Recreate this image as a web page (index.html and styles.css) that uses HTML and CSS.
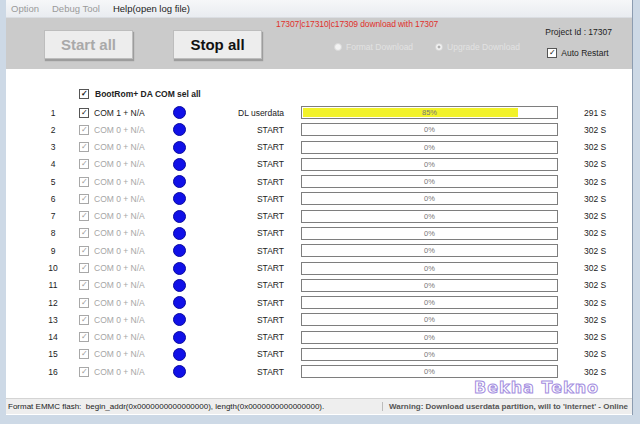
FILE: index.html
```html
<!DOCTYPE html>
<html lang="en">
<head>
    <meta charset="utf-8">
    <title>Download Tool</title>
    <link rel="stylesheet" href="styles.css">
</head>
<body>
    <div class="window">
        <div class="menubar">
            <span class="menu-item dim">Option</span>
            <span class="menu-item dim">Debug Tool</span>
            <span class="menu-item">Help(open log file)</span>
        </div>

        <div class="toolbar">
            <button class="big-btn disabled">Start all</button>
            <button class="big-btn">Stop all</button>
            <div class="mid">
                <div class="red-note">17307|c17310|c17309 download with 17307</div>
                <div class="radios">
                    <span class="radio"><span class="dot"></span>Format Download</span>
                    <span class="radio"><span class="dot on"></span>Upgrade Download</span>
                </div>
            </div>
            <div class="proj">
                <div class="proj-id">Project Id : 17307</div>
                <label class="chk-line"><span class="box checked">&#10003;</span>Auto Restart</label>
            </div>
        </div>

        <div class="main">
            <div class="sel-all"><span class="box checked">&#10003;</span>BootRom+ DA COM sel all</div>
            <div class="rows" id="rows"></div>
            <div class="watermark">Bekha Tekno</div>
        </div>

        <div class="statusbar">
            <div class="st-left">Format EMMC flash:&nbsp; begin_addr(0x0000000000000000), length(0x0000000000000000).</div>
            <div class="st-right">Warning: Download userdata partition, will to 'internet' - Online</div>
        </div>
    </div>

    <script>
        // build the 16 port rows
        const rows = document.getElementById("rows");
        for (let i = 1; i <= 16; i++) {
            const first = i === 1;
            const row = document.createElement("div");
            row.className = "row";
            row.innerHTML =
                '<span class="num">' + i + '</span>' +
                '<span class="port ' + (first ? '' : 'dim') + '">' +
                    '<span class="box checked ' + (first ? '' : 'grey') + '">&#10003;</span>' +
                    (first ? 'COM 1 + N/A' : 'COM 0 + N/A') +
                '</span>' +
                '<span class="led"></span>' +
                '<span class="state">' + (first ? 'DL userdata' : 'START') + '</span>' +
                '<span class="bar"><span class="fill" style="width:' + (first ? 85 : 0) + '%"></span>' +
                    '<span class="pct">' + (first ? '85%' : '0%') + '</span></span>' +
                '<span class="time">' + (first ? '291 S' : '302 S') + '</span>';
            rows.appendChild(row);
        }
    </script>
</body>
</html>
```

FILE: styles.css
```css
/* frame */
body {
    margin: 0;
    width: 640px;
    height: 424px;
    overflow: hidden;
    background: #cdd9e6;
    font-family: "Liberation Sans", Arial, sans-serif;
    font-size: 8.5px;
    color: #222;
}

.window {
    margin-left: 6px;
    width: 626px;
    height: 415px;
    display: flex;
    flex-direction: column;
    background: #fff;
    border-right: 1px solid #8c9cb0;
}

/* menu */
.menubar {
    height: 17px;
    display: flex;
    align-items: center;
    gap: 13px;
    padding-left: 5px;
    background: linear-gradient(#f6f7f9, #e9ecf0);
    border-bottom: 1px solid #dadde2;
    font-size: 9.5px;
}

.menu-item.dim {
    color: #9a9a9a;
}

/* toolbar */
.toolbar {
    height: 51px;
    background: #cbcbcb;
    display: flex;
    align-items: flex-start;
}

.big-btn {
    margin-top: 12px;
    width: 89px;
    height: 29px;
    border: 1px solid #bdbdbd;
    background: #ededed;
    box-shadow: 1px 2px 1px #9d9d9d;
    font-family: "Liberation Sans", Arial, sans-serif;
    font-size: 15px;
    font-weight: bold;
    color: #111;
    padding: 0;
}

.big-btn.disabled {
    margin-left: 38px;
    margin-right: 40px;
    color: #a9a9a9;
}

.mid {
    margin-left: 14px;
    width: 250px;
    white-space: nowrap;
}

.red-note {
    margin-top: 1px;
    color: #e0302c;
    font-size: 8.5px;
    letter-spacing: -0.1px;
}

.radios {
    margin-top: 13px;
    margin-left: 58px;
    display: flex;
    gap: 22px;
    color: #e2e2e2;
    font-size: 8.5px;
}

.radio {
    display: flex;
    align-items: center;
    gap: 4px;
}

.dot {
    width: 8px;
    height: 8px;
    border-radius: 50%;
    background: #f3f3f3;
    border: 1px solid #d9d9d9;
    box-sizing: border-box;
}

.dot.on {
    background: radial-gradient(#b0b0b0 30%, #f3f3f3 40%);
}

.proj {
    margin-left: auto;
    margin-right: 20px;
    margin-top: 9px;
    font-size: 8.5px;
    white-space: nowrap;
}

.proj-id {
    margin-bottom: 11px;
}

.chk-line {
    display: flex;
    align-items: center;
    gap: 4px;
    padding-left: 2px;
}

/* check boxes */
.box {
    width: 8px;
    height: 8px;
    border: 1px solid #555;
    background: #fff;
    display: inline-flex;
    align-items: center;
    justify-content: center;
    font-size: 8px;
    line-height: 1;
    color: #111;
    flex: none;
}

.box.grey {
    border-color: #a8a8a8;
    color: #999;
}

/* list */
.main {
    flex: 1;
    padding-top: 18px;
    position: relative;
}

.sel-all {
    margin-left: 73px;
    display: flex;
    align-items: center;
    gap: 6px;
    font-weight: bold;
    height: 13px;
}

.rows {
    display: grid;
    grid-auto-rows: 17.27px;
    margin-top: 4px;
}

.row {
    display: flex;
    align-items: center;
}

.num {
    text-align: center;
    padding-left: 38px;
    width: 18px;
    margin-right: 17px;
}

.port {
    width: 94px;
    display: flex;
    align-items: center;
    gap: 5px;
}

.port.dim {
    color: #a6a6a6;
}

.led {
    width: 13px;
    height: 13px;
    border-radius: 50%;
    background: #1010e8;
    border: 1px solid #0a0aa0;
    box-sizing: border-box;
}

.state {
    width: 98px;
    text-align: right;
    margin-right: 17px;
}

.bar {
    width: 257px;
    height: 13px;
    border: 1px solid #7e7e7e;
    box-sizing: border-box;
    position: relative;
    background: #fff;
    padding: 1px;
}

.fill {
    display: block;
    height: 100%;
    background: #f2f22a;
}

.pct {
    position: absolute;
    left: 0;
    right: 0;
    top: 1px;
    text-align: center;
    font-size: 7.5px;
    color: #777;
}

.time {
    margin-left: 26px;
    font-size: 8.5px;
}

.watermark {
    position: absolute;
    left: 468px;
    bottom: 1px;
    font-family: "DejaVu Sans", sans-serif;
    font-size: 16px;
    font-weight: bold;
    letter-spacing: 1px;
    color: rgba(255, 255, 255, 0.7);
    -webkit-text-stroke: 1px #a38de0;
}

/* status bar */
.statusbar {
    height: 15px;
    margin-bottom: 1px;
    display: flex;
    align-items: center;
    background: #eeeeee;
    border-top: 1px solid #d4d4d4;
    font-size: 8px;
}

.st-left {
    width: 374px;
    padding-left: 2px;
    border-right: 1px solid #bcbcbc;
    white-space: nowrap;
}

.st-right {
    padding-left: 6px;
    white-space: nowrap;
    overflow: hidden;
    font-weight: bold;
    color: #555;
}
```
